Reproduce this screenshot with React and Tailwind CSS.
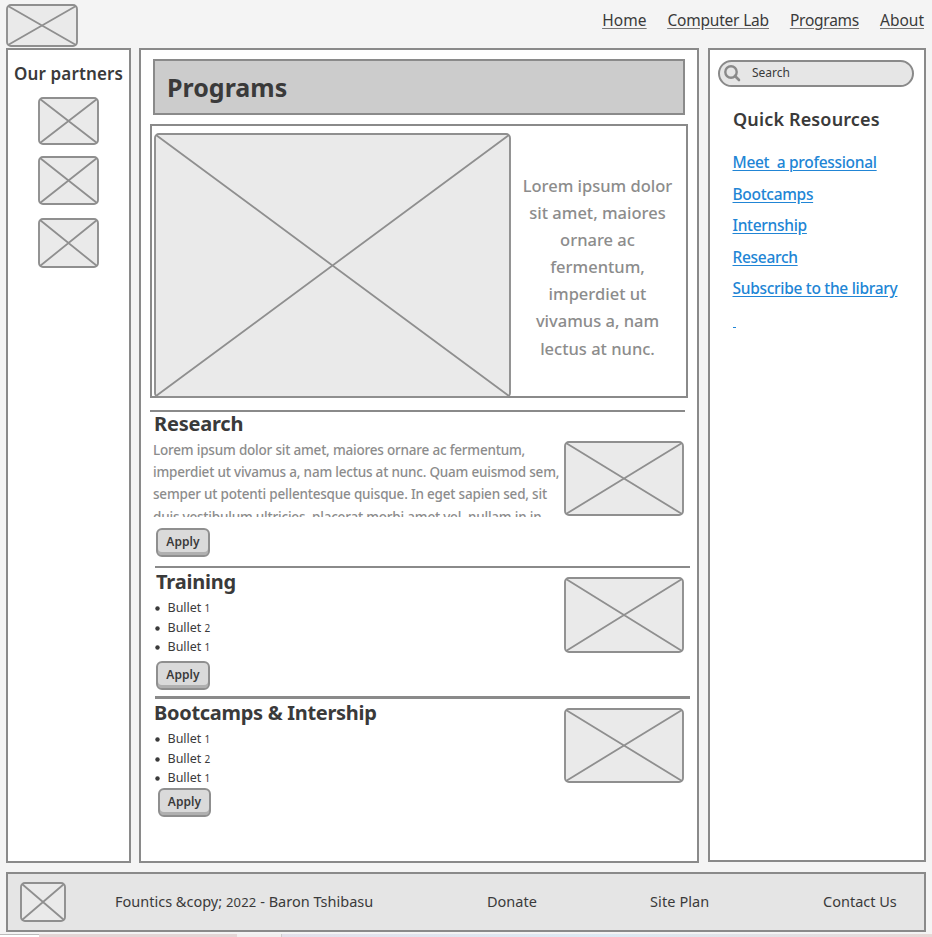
import React from "react";

function Placeholder({ w, h, className = "" }) {
  return (
    <svg width={w} height={h} viewBox={`0 0 ${w} ${h}`} fill="none" stroke="#8f8f8f" className={`block shrink-0 ${className}`}>
      <rect x="1" y="1" width={w - 2} height={h - 2} rx="4" fill="#eaeaea" strokeWidth="1.9" />
      <path d={`M2 2L${w - 2} ${h - 2}M${w - 2} 2L2 ${h - 2}`} strokeWidth="1.8" />
    </svg>
  );
}

function Apply({ className = "" }) {
  return (
    <button className={`block h-[29px] rounded-[6px] border-2 border-[#8f8f8f] bg-[#dadada] pb-[2px] text-center text-[12px] leading-[22px] font-semibold tracking-[0.1px] text-[#3a3a3a] shadow-[inset_0_-3px_0_#b0b0b0] ${className}`}>
      Apply
    </button>
  );
}

function Bullets({ className = "" }) {
  return (
    <ul className={`text-[12.5px] leading-[19px] ${className}`}>
      {["1", "2", "1"].map((n, i) => (
        <li key={i} className="flex h-[19.5px] items-center">
          <svg width="5" height="5" viewBox="0 0 5 5" fill="#3a3a3a" className="mt-[2px] mr-[8px] ml-[0.5px]">
            <circle cx="2.5" cy="2.5" r="2.2" />
          </svg>
          <span className="flex items-baseline gap-[3px] whitespace-nowrap">
            <span>Bullet</span> <span className="text-[10px] leading-[10px]">{n}</span>
          </span>
        </li>
      ))}
    </ul>
  );
}

const resources = [
  "Meet\u00a0 a professional",
  "Bootcamps",
  "Internship",
  "Research",
  "Subscribe to the library",
];

export default function App() {
  return (
    <div className="flex h-[937px] w-[932px] flex-col overflow-hidden bg-[#f4f4f4] font-['Noto_Sans','Open_Sans',sans-serif] text-[#3a3a3a]">
      <header className="flex h-[48px] shrink-0 justify-between pt-[4px] pr-[8px] pl-[6px]">
        <Placeholder w={72} h={43} />
        <nav className="flex gap-[21px] pt-[5px] text-[15.5px] leading-[22px] whitespace-nowrap underline decoration-[#777] underline-offset-[2px]">
          <a>Home</a>
          <a className="tracking-[-0.2px]">Computer Lab</a>
          <a className="tracking-[-0.25px]">Programs</a>
          <a>About</a>
        </nav>
      </header>

      <main className="flex h-[815px] shrink-0 items-start px-[6px]">
        <aside className="flex h-[815px] w-[125px] shrink-0 flex-col items-center border-2 border-[#8a8a8a] bg-white pt-[12px]">
          <h2 className="text-[17px] leading-[24px] font-semibold tracking-[0.15px] whitespace-nowrap">Our partners</h2>
          <Placeholder w={61} h={48} className="mt-[11px]" />
          <Placeholder w={61} h={49} className="mt-[11px]" />
          <Placeholder w={61} h={50} className="mt-[13px]" />
        </aside>

        <section className="ml-[8px] h-[815px] w-[560px] shrink-0 border-2 border-[#8a8a8a] bg-white">
          <div className="mt-[9px] ml-[12px] flex h-[56px] w-[532px] items-center border-2 border-[#8a8a8a] bg-[#ccc] pl-[12px]">
            <h1 className="text-[25px] leading-[36px] font-bold">Programs</h1>
          </div>
          <div className="mt-[9px] ml-[9px] flex h-[274px] w-[538px] border-2 border-[#8a8a8a] pt-[7px] pl-[2px]">
            <Placeholder w={357} h={265} />
            <p className="mr-[2px] flex-1 pt-[39px] text-center text-[16.5px] leading-[27.1px] font-medium whitespace-nowrap text-[#8c8c8c]">
              Lorem ipsum dolor<br />sit amet, maiores<br />ornare ac<br />fermentum,<br />imperdiet ut<br />vivamus a, nam<br />lectus at nunc.
            </p>
          </div>
          <hr className="mt-[12px] ml-[9px] h-[2px] w-[535px] border-0 bg-[#8a8a8a]" />

          <article className="flex h-[154px] pl-[12px]">
            <div className="flex w-[411px] flex-col items-start">
              <h2 className="ml-px text-[20px] leading-[24px] font-bold tracking-[-0.2px] whitespace-nowrap">Research</h2>
              <p className="mt-[3px] h-[78px] overflow-hidden text-[13.5px] leading-[22.2px] font-medium tracking-[-0.2px] whitespace-nowrap text-[#8c8c8c]">
                Lorem ipsum dolor sit amet, maiores ornare ac fermentum,<br />
                imperdiet ut vivamus a, nam lectus at nunc. Quam euismod sem,<br />
                semper ut potenti pellentesque quisque. In eget sapien sed, sit<br />
                duis vestibulum ultricies, placerat morbi amet vel, nullam in in
              </p>
              <Apply className="mt-[11px] ml-[3px] w-[54px]" />
            </div>
            <Placeholder w={120} h={75} className="mt-[29px]" />
          </article>
          <hr className="ml-[14px] h-[2px] w-[535px] border-0 bg-[#8a8a8a]" />

          <article className="flex h-[128px] pl-[13px]">
            <div className="flex w-[410px] flex-col items-start">
              <h2 className="ml-[2px] text-[20px] leading-[28px] font-bold tracking-[-0.2px] whitespace-nowrap">Training</h2>
              <Bullets className="mt-[2px]" />
              <Apply className="mt-[4.5px] ml-[2px] w-[54px]" />
            </div>
            <Placeholder w={120} h={76} className="mt-[9px]" />
          </article>
          <hr className="ml-[14px] h-[3px] w-[535px] border-0 bg-[#8a8a8a]" />

          <article className="flex h-[150px] pl-[13px]">
            <div className="flex w-[410px] flex-col items-start">
              <h2 className="text-[20px] leading-[28px] font-bold tracking-[-0.3px] whitespace-nowrap">Bootcamps &amp; Intership</h2>
              <Bullets className="mt-[2px]" />
              <Apply className="mt-[0.5px] ml-[4px] w-[53px]" />
            </div>
            <Placeholder w={120} h={75} className="mt-[9px]" />
          </article>
        </section>

        <aside className="ml-[9px] h-[814px] w-[218px] shrink-0 border-2 border-[#8a8a8a] bg-white">
          <div className="mt-[10px] ml-[8px] flex h-[27px] w-[196px] items-center rounded-full border-2 border-[#8a8a8a] bg-[#e6e6e6] pl-[4px]">
            <svg width="17" height="17" viewBox="0 0 17 17" fill="none" stroke="#8a8a8a" className="shrink-0">
              <circle cx="7" cy="7" r="5.7" strokeWidth="2.4" />
              <path d="M11 11L15 15" strokeWidth="2.6" strokeLinecap="round" />
            </svg>
            <span className="ml-[11px] pb-[2px] text-[12px] leading-[16px]">Search</span>
          </div>
          <h2 className="mt-[19px] ml-[23px] text-[18px] leading-[26px] font-semibold tracking-[0.15px] whitespace-nowrap">Quick Resources</h2>
          <ul className="mt-[15px] ml-[22.5px] text-[15.5px] leading-[31.5px] font-medium tracking-[-0.3px] whitespace-nowrap text-[#2185d5] underline underline-offset-[2px]">
            {resources.map((label) => (
              <li key={label}>{label}</li>
            ))}
          </ul>
          <div className="mt-[22px] ml-[23px] h-px w-[3px] bg-[#2185d5]" />
        </aside>
      </main>

      <footer className="mt-[9px] ml-[6px] flex h-[60px] w-[920px] shrink-0 items-center border-2 border-[#8a8a8a] bg-[#e5e5e5] text-[14.5px] whitespace-nowrap">
        <Placeholder w={46} h={40} className="ml-[12px]" />
        <div className="ml-[49px] w-[372px]">
          Fountics &amp;copy; <span className="text-[13px] tracking-[0.2px]">2022</span> - Baron Tshibasu
        </div>
        <div className="w-[163px]">Donate</div>
        <div className="w-[173px] tracking-[0.1px]">Site Plan</div>
        <div>Contact Us</div>
      </footer>
      <div className="mt-[2px] flex h-[3px] shrink-0">
        <div className="w-[39px] border-t border-[#bbb] bg-white" />
        <div className="w-[198px] bg-[#e3d5d5]" />
        <div className="w-[44px] bg-[#f1eeee]" />
        <div className="flex-1 border-l border-[#ccc] bg-linear-to-r from-[#e3e0ea] via-[#dce9f3] to-[#e6d8d6]" />
      </div>
    </div>
  );
}
